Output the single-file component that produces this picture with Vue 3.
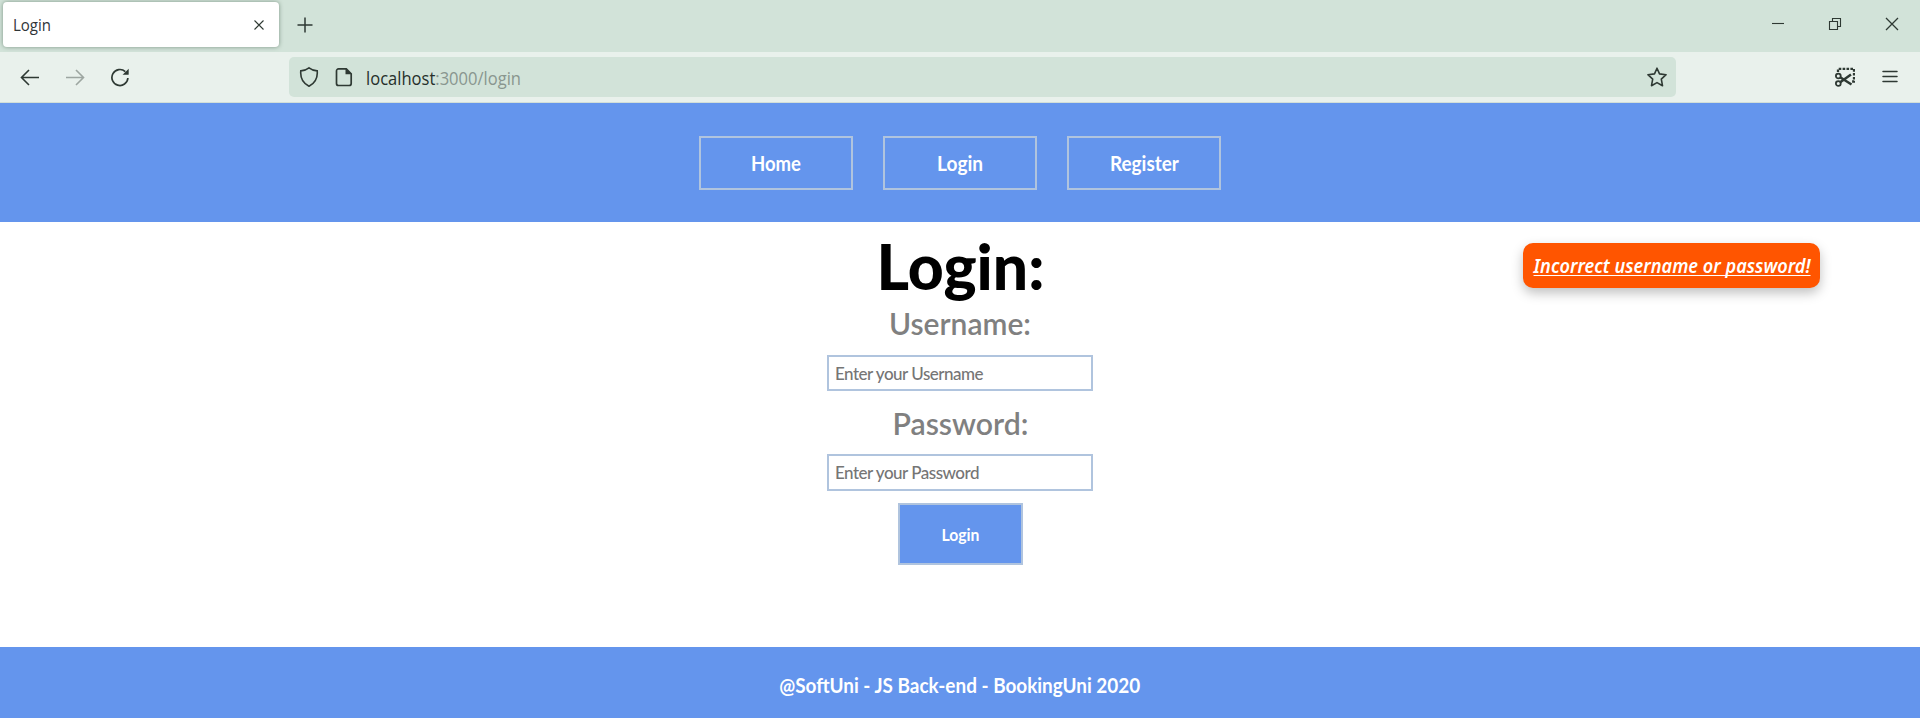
<script setup>
const links = [
  { label: 'Home', width: 50 },
  { label: 'Login', width: 46 },
  { label: 'Register', width: 69 },
]

// Condenses a label horizontally so it occupies the given width.
const vFit = {
  mounted(el, { value }) {
    el.style.transform = `scaleX(${value / el.getBoundingClientRect().width})`
  },
}
</script>

<template>
  <div class="window">
    <div class="tabs">
      <div class="tab">
        <span v-fit="38" class="tab-title fit left">Login</span>
        <svg class="ico" width="12" height="12" viewBox="0 0 12 12"><path d="M1.5 1.5l9 9M10.5 1.5l-9 9" stroke-width="1.1" /></svg>
      </div>
      <svg class="ico plus" width="16" height="16" viewBox="0 0 16 16"><path d="M8 .5v15M.5 8h15" stroke-width="1.5" /></svg>
      <div class="controls">
        <svg class="ico" width="14" height="14" viewBox="0 0 14 14"><path d="M1 6.5h12" /></svg>
        <svg class="ico" width="14" height="14" viewBox="0 0 14 14"><path d="M1.5 4.500h8v8h-8zM4.500 4.500v-3h8v8h-3" /></svg>
        <svg class="ico" width="14" height="14" viewBox="0 0 14 14"><path d="M1 1l12 12M13 1L1 13" stroke-width="1.300" /></svg>
      </div>
    </div>

    <div class="toolbar">
      <div class="nav-icons">
        <svg class="ico" width="20" height="20" viewBox="0 0 20 20"><path d="M19 10.500H1.800M9 3L1.500 10.500L9 18" stroke-width="1.6" /></svg>
        <svg class="ico faded" width="20" height="20" viewBox="0 0 20 20"><path d="M1 10.500h17.200M11 3l7.500 7.500L11 18" stroke-width="1.6" /></svg>
        <svg class="ico" width="20" height="20" viewBox="0 0 20 20"><path d="M17.900 11a8 8 0 1 1-2.600-6.400" stroke-width="1.7" /><path class="solid" d="M18.700 1.700v5.500q0 .6-.6.600h-5.500z" /></svg>
      </div>
      <div class="url">
        <svg class="ico" width="20" height="22" viewBox="0 0 20 22"><path d="M10 1.800Q14 4.800 18.200 4.900Q19.200 15.500 10 20.200Q.8 15.500 1.800 4.900Q6 4.800 10 1.800z" stroke-width="1.6" /></svg>
        <svg class="ico" width="18" height="20" viewBox="0 0 18 20"><path d="M3.500 1.900h7.800l4.900 4.900v9.700a2 2 0 0 1-2 2H3.500a2 2 0 0 1-2-2V3.900a2 2 0 0 1 2-2z" stroke-width="1.7" /><path class="solid" d="M10.500 1.500v5.800h6z" /></svg>
        <span v-fit="155" class="address fit left">localhost<span>:3000/login</span></span>
        <svg class="ico star" width="22" height="22" viewBox="0 0 22 22"><path d="M11 2.200l2.500 5.700 6.600.8-4.800 4.400 1.200 6.600-5.500-3.100-5.500 3.100 1.200-6.600L1.900 8.700l6.600-.8z" stroke-width="1.600" stroke-linejoin="round" /></svg>
      </div>
      <div class="tools">
        <svg class="ico" width="20" height="20" viewBox="0 0 20 20">
          <path d="M3 5V1.800h16V14.500h-3" stroke-width="2.300" stroke-dasharray="2.600 1.300" />
          <circle cx="3.300" cy="9" r="2.400" stroke-width="1.800" /><circle cx="3.300" cy="16.500" r="2.400" stroke-width="1.800" />
          <path d="M5.200 15.200L16 7.500M5.200 10.300L16.500 17.500" stroke-width="2.500" />
        </svg>
        <svg class="ico" width="16" height="14" viewBox="0 0 16 14"><path d="M1 1.500h14M1 6.500h14M1 11.500h14" stroke-width="1.500" stroke-linecap="round" /></svg>
      </div>
    </div>

    <header class="site-header">
      <a v-for="l in links" :key="l.label" class="link"><span v-fit="l.width" class="fit">{{ l.label }}</span></a>
    </header>

    <main class="content">
      <h1><span v-fit="168" class="fit">Login:</span></h1>
      <label><span v-fit="142" class="fit">Username:</span></label>
      <input class="username" type="text" placeholder="Enter your Username">
      <label class="second"><span v-fit="136" class="fit">Password:</span></label>
      <input class="password" type="password" placeholder="Enter your Password">
      <button type="button"><span v-fit="38" class="fit">Login</span></button>
      <div class="toast"><span v-fit="277" class="fit">Incorrect username or password!</span></div>
    </main>

    <footer><span v-fit="361" class="fit">@SoftUni - JS Back-end - BookingUni 2020</span></footer>
  </div>
</template>

<style>
body { margin: 0; overflow: hidden; }
</style>

<style scoped>
* { box-sizing: border-box; }
.window { width: 1920px; height: 718px; display: flex; flex-direction: column; background: #fff; font-family: Lato, sans-serif; }
.fit { display: inline-block; white-space: nowrap; }
.left { transform-origin: left center; }
.ico { display: block; flex: none; fill: none; stroke: #2e3933; stroke-width: 1.1; }
.solid { fill: #2e3933; stroke: none; }
.faded { opacity: .4; }

.tabs { height: 52px; flex: none; display: flex; background: #d2e3d9; }
.tab { width: 276px; height: 45px; margin: 2px 0 0 3px; padding: 0 14px 0 10px; display: flex; align-items: center; justify-content: space-between; background: #fff; border-radius: 4px; box-shadow: 0 0 4px rgba(40, 70, 50, .5); }
.tab-title { font: 15.500px "Open Sans", sans-serif; color: #303538; }
.plus { margin: 17px 0 0 18px; }
.controls { display: flex; gap: 43px; margin: 17px 21px 0 auto; }
.toolbar { height: 51px; flex: none; display: flex; align-items: center; background: #e9f1ec; border-bottom: 1px solid #d2dfd8; }
.nav-icons { display: flex; gap: 25px; width: 289px; padding-left: 20px; }
.url { width: 1387px; height: 40px; display: flex; align-items: center; padding: 0 8px 0 10px; border-radius: 5px; background: #d2e3d9; }
.url .ico + .ico { margin-left: 16px; }
.address { margin-left: 13px; padding-top: 2px; font: 18px "Open Sans", sans-serif; color: #26302b; }
.address span { color: #89968f; }
.star { margin-left: auto; }
.tools { display: flex; align-items: center; gap: 27px; margin-left: 159px; }

.site-header { height: 119px; flex: none; display: flex; justify-content: center; gap: 30px; padding-top: 33px; background: #6495ed; }
.link { width: 154px; height: 54px; display: flex; align-items: center; justify-content: center; padding-bottom: 1px; border: 2px solid #b0c4de; color: #fff; font-size: 20px; font-weight: 700; }
.content { position: relative; height: 425px; flex: none; display: flex; flex-direction: column; align-items: center; }
h1 { height: 86px; margin: 0; font-size: 62px; line-height: 88px; font-weight: 900; color: #000; }
label { margin-bottom: 16px; font-size: 30px; line-height: 31px; font-weight: 600; color: #808080; }
.second { margin: 17px 0 15px; }
input { width: 266px; height: 36px; padding: 0 6px; border: 2px solid #b0c4de; background: #fff; font: 500 17px Lato, sans-serif; letter-spacing: -.500px; outline: 0; }
input::placeholder { color: #757575; opacity: 1; }
.password { height: 37px; }
button { width: 125px; height: 62px; margin-top: 12px; padding: 0; border: 2px solid #b0c4de; background: #6495ed; color: #fff; font: 700 17px Lato, sans-serif; }
.toast { position: absolute; top: 21px; right: 100px; width: 297px; height: 45px; display: flex; align-items: center; justify-content: center; padding-left: 2px; border-radius: 10px; background: #ff5500; box-shadow: 0 5px 12px rgba(0, 0, 0, .25); color: #fff; font: italic 600 19px "Noto Sans", sans-serif; }
.toast .fit { text-decoration: underline; text-decoration-thickness: 1px; text-underline-offset: 2px; text-decoration-skip-ink: none; }
footer { flex: 1; display: flex; align-items: center; justify-content: center; padding-top: 4px; background: #6495ed; color: #fff; font-size: 20px; font-weight: 700; }
</style>
